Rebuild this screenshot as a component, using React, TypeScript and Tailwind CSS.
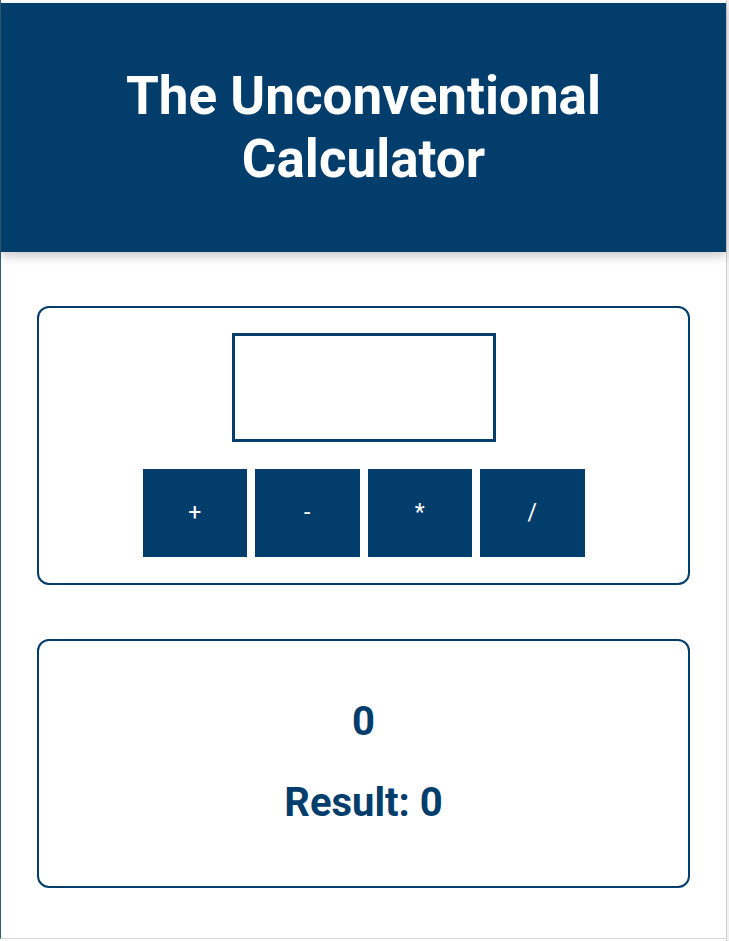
const NAVY = 'bg-[#033d6b]';

const ops = ['+', '-', '*', '/'];

export default function App() {
  return (
    <div className="flex h-[941px] w-[729px] overflow-hidden bg-white font-['Roboto',sans-serif]">
      {/* page frame */}
      <div className="flex h-[939px] w-[726px] flex-col border-b border-l border-b-[#d6d6d6] border-l-[#2e6270] bg-white pt-[3px]">
        <header
          className={`${NAVY} relative z-10 flex h-[249px] w-[725px] items-center justify-center shadow-[0_4px_10px_rgba(0,0,0,0.22)]`}
        >
          <h1 className="w-[560px] text-center text-[53px] leading-[63px] font-bold text-white">
            The Unconventional Calculator
          </h1>
        </header>

        <main className="flex flex-col items-center pt-[54px]">
          {/* input card */}
          <section className="flex h-[279px] w-[653px] flex-col items-center rounded-xl border-2 border-[#033d6b] pt-[25px]">
            <input
              type="number"
              className="h-[109px] w-[264px] border-[3px] border-[#033d6b] outline-none"
            />
            <div className="mt-[27px] flex gap-[8px]">
              {ops.map((op) => (
                <button
                  key={op}
                  type="button"
                  className={`${NAVY} h-[88px] w-[104.5px] text-[23px] text-white`}
                >
                  {op}
                </button>
              ))}
            </div>
          </section>

          {/* output card */}
          <section className="mt-[54px] flex h-[249px] w-[653px] flex-col items-center justify-center rounded-xl border-2 border-[#033d6b] text-[#033d6b]">
            <h2 className="mt-[-2px] text-[40px] leading-[48px] font-bold">0</h2>
            <h2 className="mt-[33px] text-[40px] leading-[48px] font-bold">Result: 0</h2>
          </section>
        </main>
      </div>
      {/* scrollbar strip */}
      <div className="h-full w-[3px] border-l border-[#cfcfcf] bg-[#f1f1f1]" />
    </div>
  );
}
